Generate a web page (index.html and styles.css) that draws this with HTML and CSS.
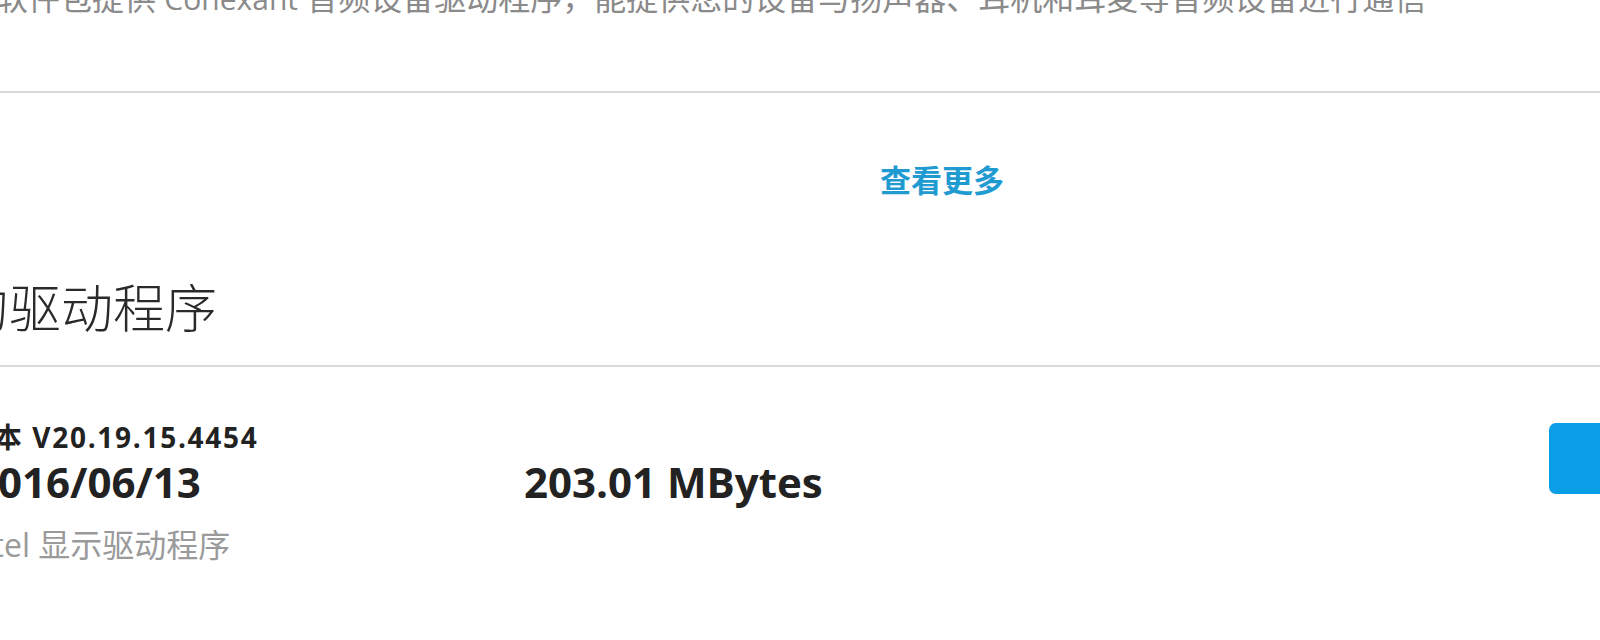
FILE: index.html
```html
<!DOCTYPE html>
<html lang="zh-CN">
<head>
<meta charset="utf-8">
<title>驱动程序</title>
<link rel="stylesheet" href="styles.css">
</head>
<body>
<div class="page">
  <p class="desc">本软件包提供 <span class="en">Conexant</span> 音频设备驱动程序，能提供您的设备与扬声器、耳机和耳麦等音频设备进行通信</p>
  <div class="rule rule-top"></div>
  <div class="more"><a class="more-link" href="#">查看更多</a></div>
  <h2 class="title">推荐的驱动程序</h2>
  <div class="rule rule-title"></div>
  <div class="row">
    <div class="version">版本 V20.19.15.4454</div>
    <div class="date">2016/06/13</div>
    <div class="size">203.01 MBytes</div>
    <div class="name">Intel 显示驱动程序</div>
    <a class="download" href="#">下载</a>
  </div>
</div>
</body>
</html>
```

FILE: styles.css
```css
html, body {
  margin: 0;
  padding: 0;
  overflow: hidden;
  background: #ffffff;
}

body {
  font-family: "Open Sans", "Noto Sans CJK SC", sans-serif;
  color: #222222;
}

.page {
  margin-left: -36px;
  width: 1956px;
}

.desc {
  margin: -24px 0 0 0;
  font-size: 32px;
  line-height: 44px;
  color: #8a8a8a;
  white-space: nowrap;
}

.desc .en {
  font-size: 30px;
}

.rule {
  height: 2px;
  background: #d9d9d9;
}

.rule-top {
  margin-top: 70px;
}

.more {
  margin-top: 67px;
  text-align: center;
  font-size: 31px;
  line-height: 40px;
  font-weight: 700;
}

.more-link {
  color: #1f9bd2;
  text-decoration: none;
}

.title {
  margin: 76px 0 0 -111px;
  font-family: "Noto Sans CJK SC", sans-serif;
  font-size: 52px;
  line-height: 60px;
  font-weight: 300;
  color: #2a2a2a;
  white-space: nowrap;
}

.rule-title {
  margin-top: 29px;
}

.row {
  display: grid;
  grid-template-columns: 560px 1fr 200px;
  padding-top: 52px;
  padding-right: 171px;
}

.version {
  grid-column: 1;
  grid-row: 1;
  font-size: 28px;
  line-height: 36px;
  font-weight: 700;
  letter-spacing: 1.7px;
  white-space: nowrap;
}

.date {
  grid-column: 1;
  grid-row: 2;
  margin: 2px 0 0 10px;
  font-size: 42px;
  line-height: 50px;
  font-weight: 700;
}

.size {
  grid-column: 2;
  grid-row: 2;
  margin-top: 2px;
  font-size: 42px;
  line-height: 50px;
  font-weight: 700;
}

.name {
  grid-column: 1;
  grid-row: 3;
  margin-top: 18px;
  font-size: 32px;
  line-height: 40px;
  color: #9a9a9a;
  white-space: nowrap;
}

.download {
  grid-column: 3;
  grid-row: 1 / 3;
  align-self: start;
  margin-top: 4px;
  height: 71px;
  border-radius: 7px;
  background: #0a9ee6;
  color: #ffffff;
  font-size: 28px;
  line-height: 71px;
  text-align: center;
  text-decoration: none;
}
```
